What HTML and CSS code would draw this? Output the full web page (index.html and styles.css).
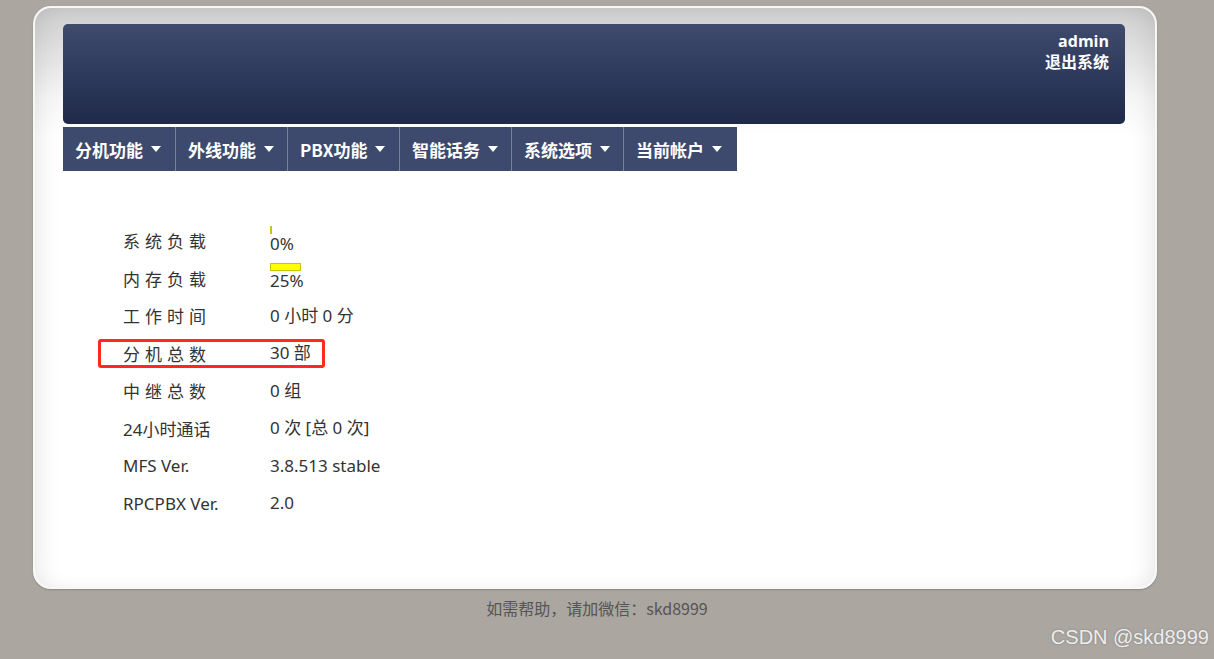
FILE: index.html
```html
<!DOCTYPE html>
<html>
<head>
    <title>PBX 系统状态</title>
    <link rel="stylesheet" href="styles.css">
</head>
<body>
    <div class="card">
        <!-- Header -->
        <div class="header">
            <div class="user">admin</div>
            <div class="user">退出系统</div>
        </div>

        <!-- Main menu -->
        <ul class="menu">
            <li>分机功能<span class="caret"></span></li>
            <li>外线功能<span class="caret"></span></li>
            <li>PBX功能<span class="caret"></span></li>
            <li>智能话务<span class="caret"></span></li>
            <li>系统选项<span class="caret"></span></li>
            <li>当前帐户<span class="caret"></span></li>
        </ul>

        <!-- Status -->
        <div class="stats">
            <div class="row">
                <div class="label spaced">系统负载</div>
                <div class="value">
                    <div class="bar" style="width: 0px;"></div>
                    0%
                </div>
            </div>
            <div class="row">
                <div class="label spaced">内存负载</div>
                <div class="value">
                    <div class="bar" style="width: 29px;"></div>
                    25%
                </div>
            </div>
            <div class="row">
                <div class="label spaced">工作时间</div>
                <div class="value">0 小时 0 分</div>
            </div>
            <div class="row marked">
                <div class="label spaced">分机总数</div>
                <div class="value">30 部</div>
            </div>
            <div class="row">
                <div class="label spaced">中继总数</div>
                <div class="value">0 组</div>
            </div>
            <div class="row">
                <div class="label">24小时通话</div>
                <div class="value">0 次 [总 0 次]</div>
            </div>
            <div class="row">
                <div class="label">MFS Ver.</div>
                <div class="value">3.8.513 stable</div>
            </div>
            <div class="row">
                <div class="label">RPCPBX Ver.</div>
                <div class="value">2.0</div>
            </div>
        </div>
    </div>

    <div class="footer">如需帮助，请加微信：skd8999</div>
    <div class="watermark">CSDN @skd8999</div>
</body>
</html>
```

FILE: styles.css
```css
body { margin: 0; background: #aba6a0; font-family: "Noto Sans", "Noto Sans CJK SC", sans-serif; color: #333; }
.card { width: 1062px; margin: 6px 0 0 33px; padding: 16px 30px 65px 28px; border: 2px solid #f7f7f7; border-radius: 18px; background: linear-gradient(#cdcdcd, #f6f6f6 90px, #fff 130px); box-shadow: 0 1px 2px rgba(0,0,0,0.2), inset 14px 0 24px -12px rgba(0,0,0,0.1), inset -14px 0 24px -12px rgba(0,0,0,0.1); }
.header { height: 100px; padding: 7px 16px 0 0; box-sizing: border-box; border-radius: 5px; background: linear-gradient(#3e4b6c, #1f2a4b); text-align: right; }
.user { color: #fff; font-weight: bold; font-size: 16px; line-height: 21px; font-family: "Open Sans", "Noto Sans CJK SC", sans-serif; }
.menu { list-style: none; margin: 3px 0 0; padding: 0; display: flex; }
.menu li { width: 112px; height: 44px; box-sizing: border-box; padding-left: 12px; display: flex; align-items: center; background: #3d4a6e; color: #fff; font-size: 17px; font-weight: bold; font-family: "Noto Sans CJK SC", sans-serif; border-left: 1px solid #7b8298; }
.menu li:first-child { border-left: none; }
.menu li:last-child { width: 114px; }
.caret { margin-left: 8px; border-left: 5px solid transparent; border-right: 5px solid transparent; border-top: 6px solid #fff; }
.stats { margin-top: 51px; padding-left: 60px; }
.row { height: 37.5px; display: flex; align-items: center; position: relative; }
.label { width: 147px; font-size: 17px; }
.spaced { letter-spacing: 5px; }
.value { font-size: 17px; line-height: 20px; }
.bar { height: 6px; border: 1px solid #c9c600; background: #ffff00; margin-top: -2px; }
.marked::after { content: ""; position: absolute; left: -25px; top: 4px; width: 221px; height: 23px; border: 3px solid #ff2a1a; border-radius: 3px; }
.footer { width: 1128px; margin-left: 33px; padding-top: 7px; text-align: center; font-size: 16px; color: #555; font-family: "Noto Sans CJK SC", sans-serif; }
.watermark { position: absolute; right: 5px; bottom: 10px; font-size: 20px; color: #eee; font-family: "Liberation Sans", sans-serif; text-shadow: 0 0 2px #777; }
```
